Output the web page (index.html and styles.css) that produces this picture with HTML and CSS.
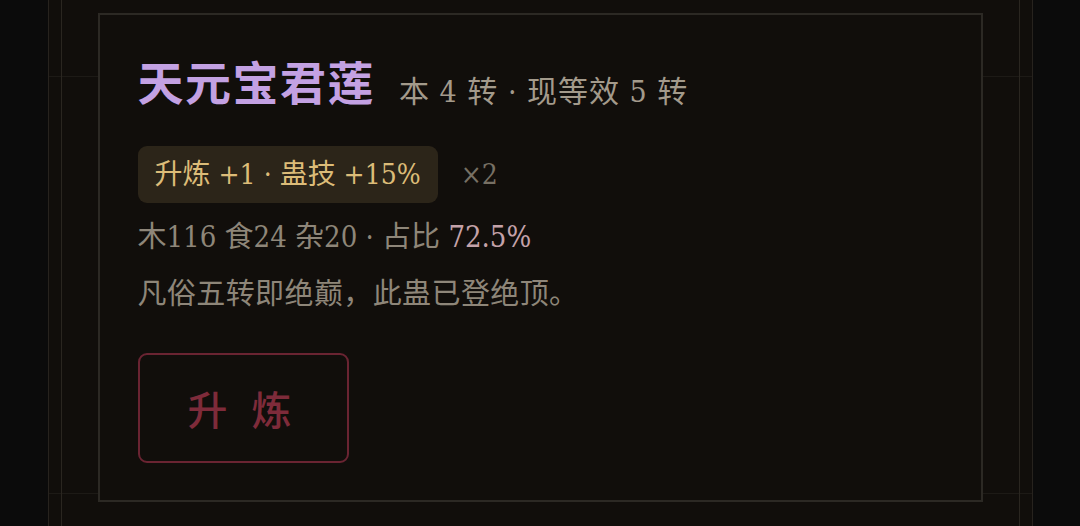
FILE: index.html
```html
<!DOCTYPE html>
<html lang="zh-CN">
<head>
<meta charset="utf-8">
<title>天元宝君莲</title>
<link rel="stylesheet" href="styles.css">
</head>
<body>
<div class="page">
  <div class="frame">
    <section class="card">
      <div class="title-row">
        <h1 class="name">天元宝君莲</h1>
        <span class="rank">本 4 转 · 现等效 5 转</span>
      </div>
      <div class="badge-row">
        <span class="badge">升炼 +1 · 蛊技 +15%</span>
        <span class="count">×2</span>
      </div>
      <p class="stats">木116 食24 杂20 · 占比 <span class="ratio">72.5%</span></p>
      <p class="note">凡俗五转即绝巅，此蛊已登绝顶。</p>
      <button class="refine" type="button">升炼</button>
    </section>
  </div>
</div>
</body>
</html>
```

FILE: styles.css
```css
html, body {
  margin: 0;
  padding: 0;
  height: 526px;
  overflow: hidden;
  background: #0b0b0b;
}

body {
  font-family: "DejaVu Serif Condensed", "Noto Sans CJK SC", serif;
}

.page {
  width: 983px;
  height: 526px;
  margin: 0 auto;
  background-color: #110e0b;
  background-image:
    linear-gradient(#1d1a16, #1d1a16),
    linear-gradient(#1d1a16, #1d1a16);
  background-size: 100% 1px, 100% 1px;
  background-position: 0 76px, 0 493px;
  background-repeat: no-repeat;
  border-left: 1px solid #27231e;
  border-right: 1px solid #27231e;
}

.frame {
  margin: 0 12px;
  height: 526px;
  border-left: 1px solid #2a2620;
  border-right: 1px solid #2a2620;
  padding: 13px 36px 0;
  box-sizing: border-box;
}

.card {
  height: 489px;
  box-sizing: border-box;
  border: 2px solid #2c2924;
  background: #110e0b;
  padding: 37px 38px 0;
}

.title-row {
  display: flex;
  align-items: baseline;
  gap: 24px;
}

.name {
  margin: 0;
  font-family: "Noto Sans CJK SC", sans-serif;
  font-weight: 700;
  font-size: 46px;
  line-height: 57px;
  letter-spacing: 1.5px;
  color: #c3a1e3;
}

.rank {
  font-size: 30px;
  letter-spacing: 1px;
  color: #a39a8b;
  position: relative;
  top: 2px;
}

.badge-row {
  display: flex;
  align-items: center;
  gap: 23px;
  margin-top: 37px;
}

.badge {
  background: #2c2519;
  color: #dcbc78;
  font-size: 28px;
  line-height: 33px;
  padding: 12px 17px;
  border-radius: 9px;
}

.count {
  font-size: 28px;
  color: #777064;
}

.stats, .note {
  margin: 0;
  font-size: 29px;
  line-height: 40px;
  color: #8e8679;
}

.stats {
  margin-top: 14px;
}

.note {
  margin-top: 17px;
  letter-spacing: 0.4px;
}

.ratio {
  color: #c4a2a9;
}

.refine {
  display: block;
  margin-top: 39px;
  width: 211px;
  height: 110px;
  box-sizing: border-box;
  background: transparent;
  border: 2px solid #6a2432;
  border-radius: 9px;
  color: #7e2b3a;
  font-family: "Noto Sans CJK SC", sans-serif;
  font-weight: 500;
  font-size: 40px;
  letter-spacing: 24px;
  text-indent: 17px;
  padding: 0;
}
```
